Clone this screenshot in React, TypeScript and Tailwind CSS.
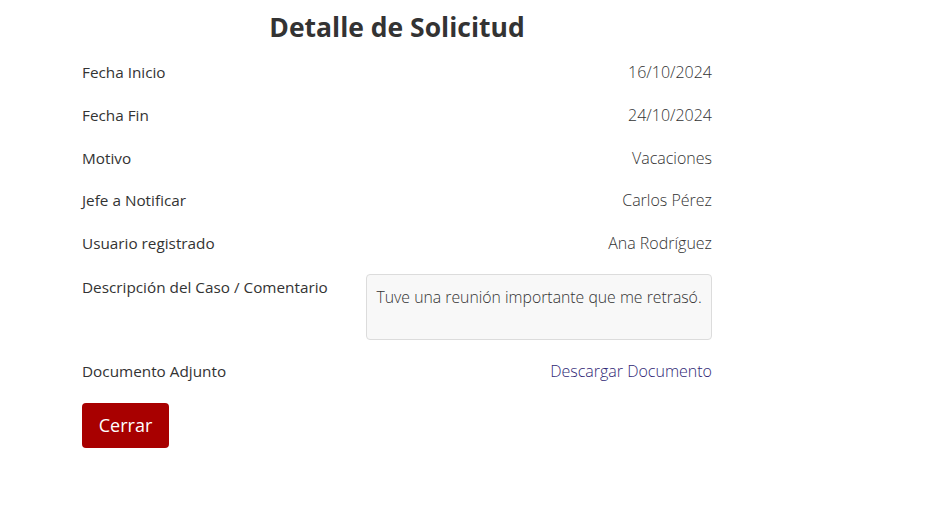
import React from 'react'

const rows = [
  { label: 'Fecha Inicio', value: '16/10/2024' },
  { label: 'Fecha Fin', value: '24/10/2024' },
  { label: 'Motivo', value: 'Vacaciones' },
  { label: 'Jefe a Notificar', value: 'Carlos Pérez' },
  { label: 'Usuario registrado', value: 'Ana Rodríguez' },
]

export default function App() {
  return (
    <div className="min-h-[522px] bg-white font-['Open_Sans',sans-serif] text-[#333]">
      <div className="w-[630px] ml-[82px] pt-[10px]">
        <h1 className="text-center text-[26.5px] leading-[34px] font-bold text-[#333] mb-[16px]">
          Detalle de Solicitud
        </h1>

        <div className="flex flex-col gap-[18.75px]">
          {rows.map((row) => (
            <div key={row.label} className="flex leading-6">
              <div className="w-[45%] text-[15.3px] font-medium text-[#333]">{row.label}</div>
              <div className="w-[55%] text-right text-[16px] font-light text-[#333]">{row.value}</div>
            </div>
          ))}

          <div className="flex leading-6">
            <div className="w-[45%] text-[15.3px] font-medium text-[#333] pt-[1px]">
              Descripción del Caso / Comentario
            </div>
            <div className="w-[55%]">
              <div className="h-[66px] rounded-[4px] border border-[#dcdcdc] bg-[#f8f8f8] px-[10px] pt-[10px] text-[15.8px] font-light text-[#333] whitespace-nowrap">
                Tuve una reunión importante que me retrasó.
              </div>
            </div>
          </div>

          <div className="flex leading-6">
            <div className="w-[45%] text-[15.3px] font-medium text-[#333]">Documento Adjunto</div>
            <div className="w-[55%] text-right">
              <a href="#" className="text-[16px] font-light text-[#2f1f75]">
                Descargar Documento
              </a>
            </div>
          </div>
        </div>

        <button className="mt-[20px] h-[45px] w-[87px] rounded-[4px] bg-[#a80000] text-[18px] text-white">
          Cerrar
        </button>
      </div>
    </div>
  )
}
